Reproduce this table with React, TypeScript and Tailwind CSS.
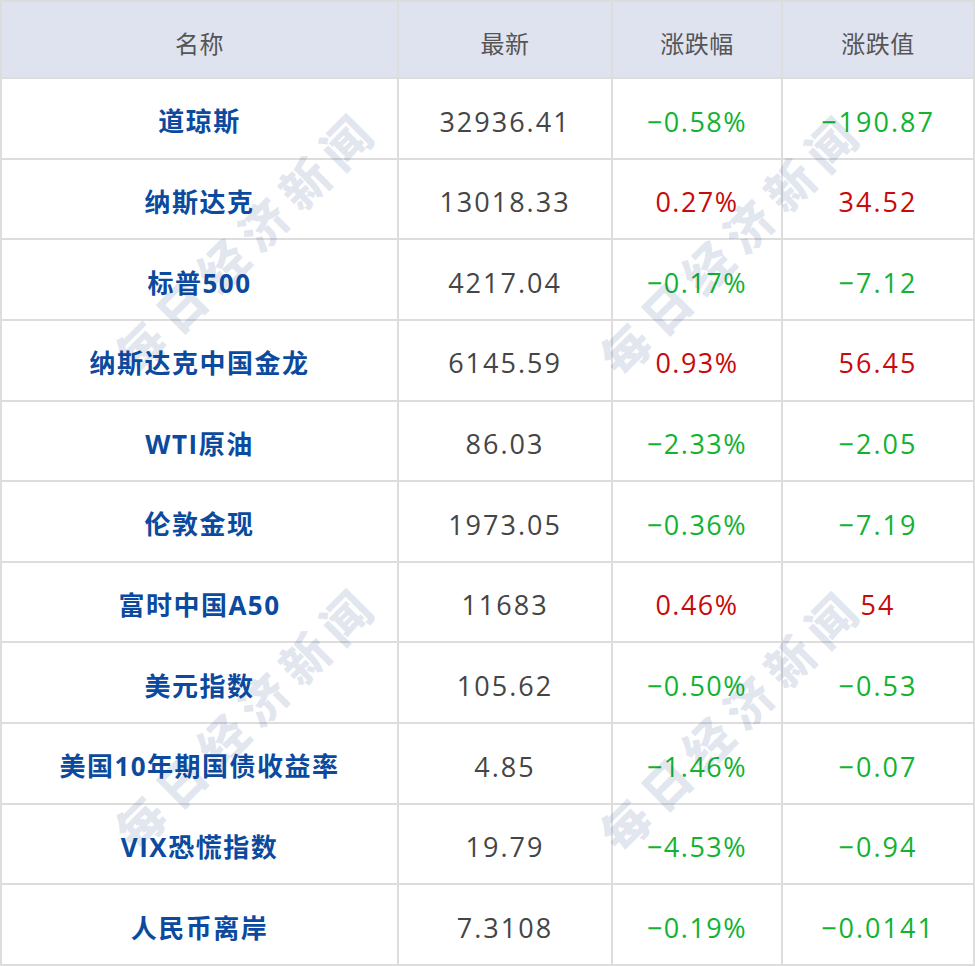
const ROWS = [
  { name: '道琼斯', last: '32936.41', pct: '-0.58%', chg: '-190.87' },
  { name: '纳斯达克', last: '13018.33', pct: '0.27%', chg: '34.52' },
  { name: '标普500', last: '4217.04', pct: '-0.17%', chg: '-7.12' },
  { name: '纳斯达克中国金龙', last: '6145.59', pct: '0.93%', chg: '56.45' },
  { name: 'WTI原油', last: '86.03', pct: '-2.33%', chg: '-2.05' },
  { name: '伦敦金现', last: '1973.05', pct: '-0.36%', chg: '-7.19' },
  { name: '富时中国A50', last: '11683', pct: '0.46%', chg: '54' },
  { name: '美元指数', last: '105.62', pct: '-0.50%', chg: '-0.53' },
  { name: '美国10年期国债收益率', last: '4.85', pct: '-1.46%', chg: '-0.07' },
  { name: 'VIX恐慌指数', last: '19.79', pct: '-4.53%', chg: '-0.94' },
  { name: '人民币离岸', last: '7.3108', pct: '-0.19%', chg: '-0.0141' },
]

const HEADERS = ['名称', '最新', '涨跌幅', '涨跌值']

const MARKS = [
  'left-[245px] top-[240px]',
  'left-[730px] top-[242px]',
  'left-[245px] top-[715px]',
  'left-[730px] top-[718px]',
]

// show the minus sign as the wide dash used in the screenshot
const fmt = (v: string) => v.replace('-', '\u2212')

export default function App() {
  return (
    <div className="relative w-[975px] h-[966px] bg-white font-['Open_Sans','Noto_Sans_CJK_SC',sans-serif] overflow-hidden">
      <div className="grid grid-cols-[395px_212px_168px_1fr] grid-rows-[75px_repeat(11,1fr)] gap-[2px] p-[2px] h-full bg-[#dddddd]">
        {HEADERS.map((h) => (
          <div
            key={h}
            className="bg-[#dfe3f0] flex items-center justify-center pt-[8px] text-[24px] text-[#555555] tracking-[0.5px]"
          >
            {h}
          </div>
        ))}
        {ROWS.map((r) => {
          const up = !r.pct.startsWith('-')
          const tone = up ? 'text-[#c80a0a]' : 'text-[#12b232]'
          return [
            <div
              key={r.name}
              className="bg-white flex items-center justify-center pt-[7px] text-[26px] font-bold text-[#0b4a9e] tracking-[1.5px]"
            >
              {r.name}
            </div>,
            <div
              key={r.name + 'l'}
              className="bg-white flex items-center justify-center pt-[7px] text-[27px] text-[#454545] tracking-[2px]"
            >
              {r.last}
            </div>,
            <div
              key={r.name + 'p'}
              className={`bg-white flex items-center justify-center pt-[7px] text-[27px] tracking-[1.5px] ${tone}`}
            >
              {fmt(r.pct)}
            </div>,
            <div
              key={r.name + 'c'}
              className={`bg-white flex items-center justify-center pt-[7px] text-[27px] tracking-[2px] ${tone}`}
            >
              {fmt(r.chg)}
            </div>,
          ]
        })}
      </div>

      {MARKS.map((pos) => (
        <div
          key={pos}
          className={`absolute ${pos} -translate-x-1/2 -translate-y-1/2 -rotate-45 pointer-events-none whitespace-nowrap font-['Noto_Sans_CJK_SC',sans-serif] font-black text-[48px] tracking-[10px] text-[#1e3c82]/[0.13]`}
        >
          每日经济新闻
        </div>
      ))}
    </div>
  )
}
